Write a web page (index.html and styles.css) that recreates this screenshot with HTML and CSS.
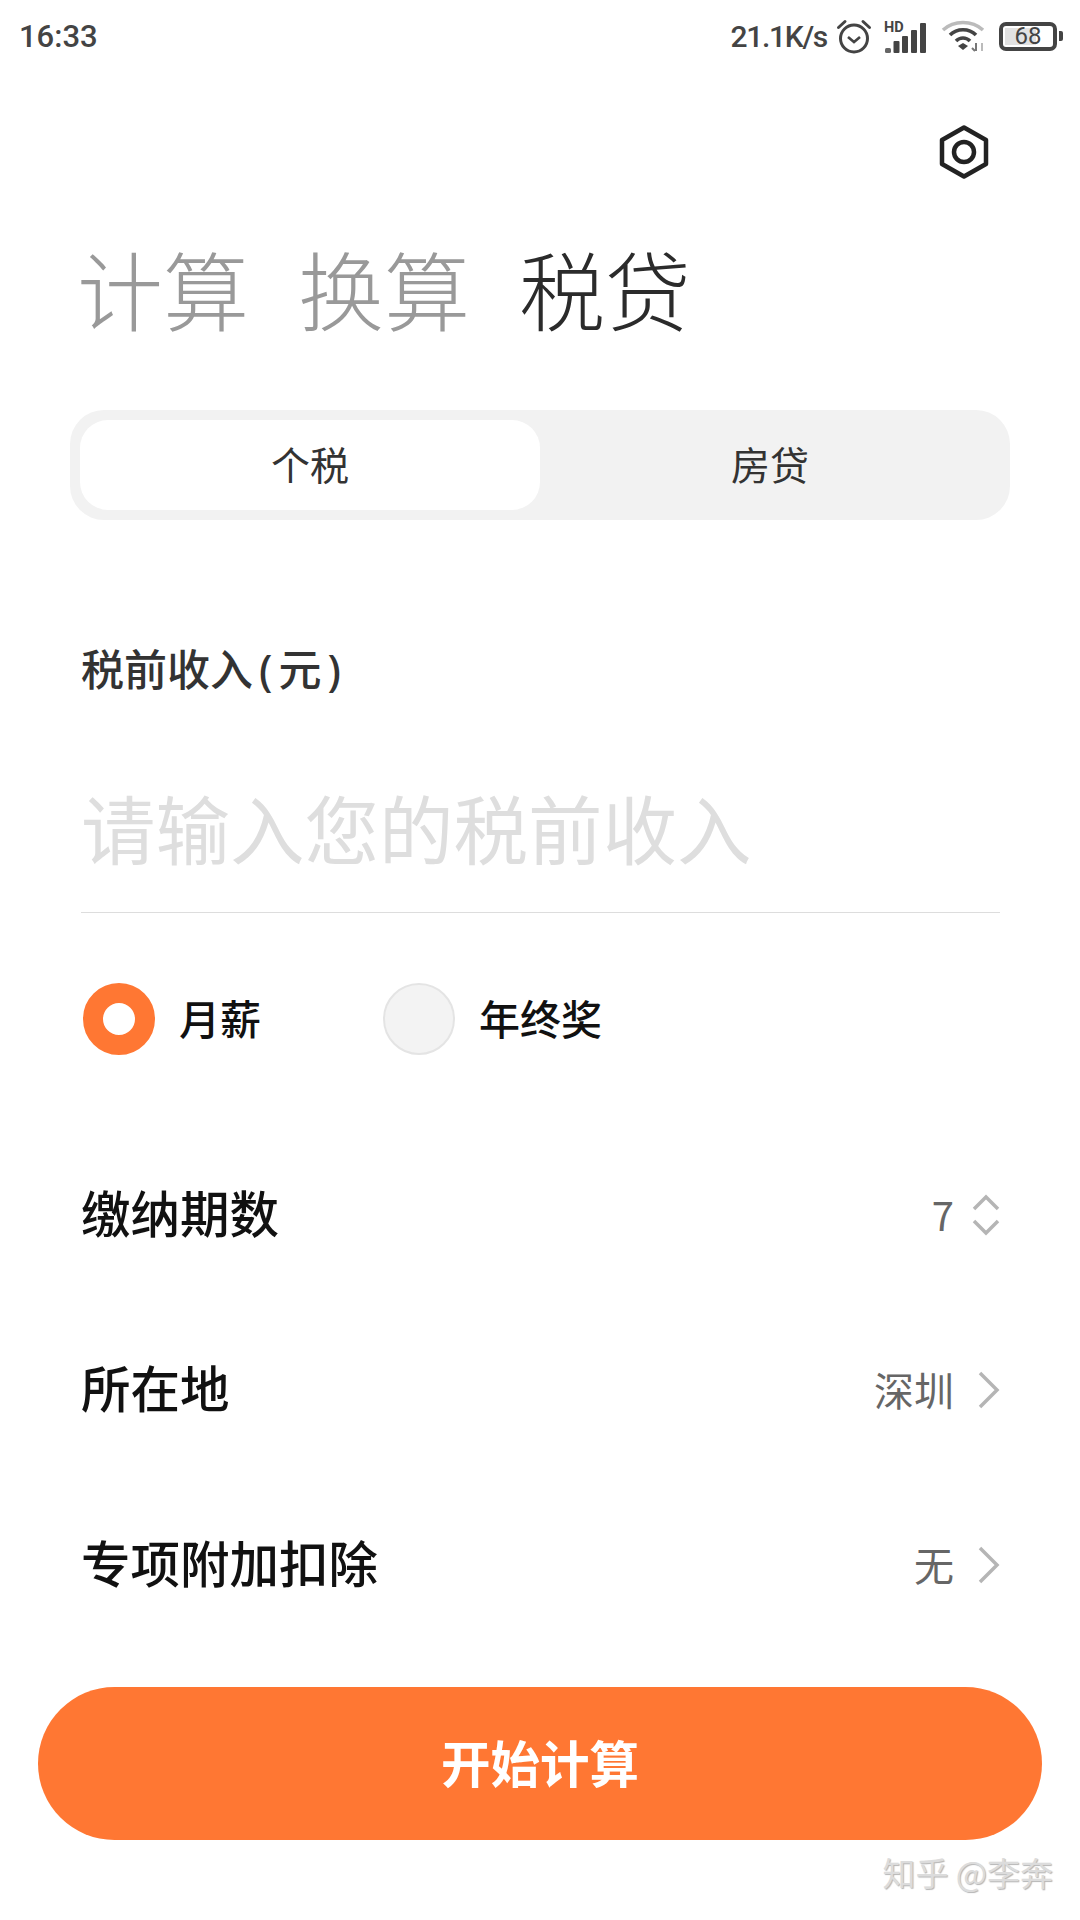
FILE: index.html
```html
<!DOCTYPE html>
<html lang="zh-CN">

<head>
    <meta charset="UTF-8">
    <meta name="viewport" content="width=device-width, initial-scale=1.0">
    <title>税贷</title>
    <link rel="stylesheet" href="styles.css">
</head>

<body>
    <div class="page">
        <div class="status">
            <span class="time">16:33</span>
            <div class="status-right">
                <span class="speed">21.1K/s</span>
                <svg class="ic-alarm" width="36" height="36" viewBox="0 0 36 36" fill="none" stroke="#444" stroke-width="3">
                    <circle cx="18" cy="20.5" r="13.5" />
                    <path d="M12 19l6 5 6-5" stroke-width="2.6" />
                    <path d="M2.5 9.5L9 3.5M33.5 9.5L27 3.5" stroke-linecap="round" />
                </svg>
                <svg class="ic-signal" width="44" height="36" viewBox="0 -4 44 36" fill="#444">
                    <text x="0" y="10" class="hd">HD</text>
                    <rect x="1" y="26" width="6" height="5" rx="1.500" fill="#666" />
                    <rect x="9.500" y="19" width="6" height="12" rx="1" />
                    <rect x="18" y="14" width="6" height="17" rx="1" />
                    <rect x="27" y="8" width="6" height="23" rx="1" />
                    <rect x="36" y="1" width="6" height="30" rx="1" />
                </svg>
                <svg class="ic-wifi" width="44" height="34" viewBox="0 0 44 34" fill="none" stroke="#444" stroke-width="3.6">
                    <path d="M2 11C13 1 31 1 42 11" stroke="#bbb" />
                    <path d="M9 16C16 9 28 9 35 16" />
                    <path d="M15 22C19 18 25 18 29 22" />
                    <path d="M17 27l5-3 5 3-5 4z" fill="#444" stroke="none" />
                    <path d="M35 24v8M31 29l3 3" stroke="#777" stroke-width="2" />
                    <path d="M41 24v8" stroke="#bbb" stroke-width="2" />
                </svg>
                <div class="battery">
                    <div class="battery-body">
                        <div class="battery-fill"></div>
                        <span class="battery-num">68</span>
                    </div>
                    <div class="battery-tip"></div>
                </div>
            </div>
        </div>

        <div class="toolbar">
            <svg width="50" height="54" viewBox="0 0 50 54" fill="none" stroke="#222" stroke-width="4.500" stroke-linejoin="round">
                <path d="M25 2.500L47 15v24L25 51.500 3 39V15z" />
                <circle cx="25" cy="27" r="10" />
            </svg>
        </div>

        <div class="tabs">
            <span class="tab">计算</span>
            <span class="tab">换算</span>
            <span class="tab tab-on">税贷</span>
        </div>

        <div class="segment">
            <div class="seg-item seg-on">个税</div>
            <div class="seg-item">房贷</div>
        </div>

        <div class="form">
            <div class="field-label">税前收入<span class="paren">(</span>元<span class="paren">)</span></div>
            <div class="field-input">请输入您的税前收入</div>

            <div class="radios">
                <div class="radio-item first">
                    <span class="radio radio-on"></span>
                    <span class="radio-text">月薪</span>
                </div>
                <div class="radio-item">
                    <span class="radio"></span>
                    <span class="radio-text">年终奖</span>
                </div>
            </div>

            <div class="row">
                <span class="row-name">缴纳期数</span>
                <span class="row-value">7</span>
                <svg class="updown" width="28" height="42" viewBox="0 0 28 42" fill="none" stroke="#b5b5b5" stroke-width="3.500">
                    <path d="M2 15L14 3l12 12M2 27l12 12 12-12" />
                </svg>
            </div>
            <div class="row">
                <span class="row-name">所在地</span>
                <span class="row-value">深圳</span>
                <svg class="arrow" width="22" height="38" viewBox="0 0 22 38" fill="none" stroke="#b5b5b5" stroke-width="3.500">
                    <path d="M2 2l17 17L2 36" />
                </svg>
            </div>
            <div class="row">
                <span class="row-name">专项附加扣除</span>
                <span class="row-value">无</span>
                <svg class="arrow" width="22" height="38" viewBox="0 0 22 38" fill="none" stroke="#b5b5b5" stroke-width="3.500">
                    <path d="M2 2l17 17L2 36" />
                </svg>
            </div>
        </div>

        <button class="start">开始计算</button>
        <div class="watermark">知乎 @李奔</div>
    </div>
</body>

</html>
```

FILE: styles.css
```css
* {
    box-sizing: border-box;
}

body {
    margin: 0;
    background-color: white;
    font-family: "Noto Sans", "Noto Sans CJK SC", sans-serif;
}

.page {
    width: 1080px;
    height: 1920px;
    overflow: hidden;
    display: flex;
    flex-direction: column;
}

.status {
    height: 72px;
    padding: 0 17px 0 19px;
    display: flex;
    justify-content: space-between;
    align-items: center;
    color: #444;
}
.time {
    font-family: Roboto, sans-serif;
    font-size: 31px;
    font-weight: 500;
}
.status-right {
    display: flex;
    align-items: center;
}
.speed {
    font-family: Roboto, sans-serif;
    font-size: 30px;
    font-weight: 500;
    letter-spacing: -1.3px;
    margin-right: 9px;
}
.ic-alarm {
    margin-right: 12px;
}
.ic-signal {
    margin-right: 13px;
}
.ic-wifi {
    margin-right: 14px;
}
.hd {
    font-family: Roboto, sans-serif;
    font-size: 14.5px;
    font-weight: 700;
}

.battery {
    display: flex;
    align-items: center;
    gap: 2px;
}
.battery-body {
    position: relative;
    width: 58px;
    height: 29px;
    border: 4px solid #444;
    border-radius: 7px;
    display: flex;
    justify-content: center;
    align-items: center;
}
.battery-fill {
    position: absolute;
    left: 2px;
    top: 2px;
    bottom: 2px;
    width: 62%;
    background-color: #e2e2e2;
}
.battery-num {
    position: relative;
    font-family: Roboto, sans-serif;
    font-size: 24px;
    color: #444;
}
.battery-tip {
    width: 4px;
    height: 10px;
    border-radius: 0 2px 2px 0;
    background-color: #444;
}

.toolbar {
    display: flex;
    justify-content: flex-end;
    padding: 53px 91px 0 0;
}
.toolbar svg {
    display: block;
}

.tabs {
    display: flex;
    gap: 49px;
    margin-top: 53px;
    padding-left: 77px;
}
.tab {
    font-family: "Noto Sans CJK SC", sans-serif;
    font-size: 86px;
    font-weight: 300;
    line-height: 112px;
    color: #999;
}
.tab-on {
    color: #2b2b2b;
}

.segment {
    display: flex;
    width: 940px;
    height: 110px;
    margin: 66px 0 0 70px;
    padding: 10px;
    background-color: #f2f2f2;
    border-radius: 34px;
}
.seg-item {
    flex: 1;
    display: flex;
    justify-content: center;
    align-items: center;
    padding-bottom: 4px;
    font-family: "Noto Sans CJK SC", sans-serif;
    font-size: 39px;
    color: #333;
    border-radius: 28px;
}
.seg-on {
    background-color: white;
}

.form {
    padding: 0 80px 0 81px;
}
.field-label {
    margin-top: 121px;
    font-size: 43px;
    line-height: 58px;
    font-weight: 500;
    color: #333;
}
.paren {
    padding: 0 6px;
}
.field-input {
    height: 214px;
    padding-top: 84px;
    border-bottom: 1px solid #ddd;
    font-family: "Noto Sans CJK SC", sans-serif;
    font-size: 74.5px;
    line-height: 88px;
    color: #dedede;
    white-space: nowrap;
}

.radios {
    display: flex;
    margin: 70px 0 0 2px;
}
.radio-item {
    display: flex;
    align-items: center;
    gap: 24px;
}
.radio-item.first {
    width: 300px;
}
.radio {
    width: 72px;
    height: 72px;
    border-radius: 50%;
    background-color: #f3f3f3;
    border: 2px solid #e4e4e4;
}
.radio-on {
    background-color: white;
    border: 20px solid #ff7733;
}
.radio-text {
    padding-bottom: 5px;
    font-size: 41px;
    font-weight: 500;
    color: #111;
}

.row {
    display: flex;
    align-items: center;
    height: 70px;
    margin-top: 105px;
}
.radios + .row {
    margin-top: 122px;
}
.row-name {
    flex: 1;
    font-size: 49.5px;
    font-weight: 500;
    color: #111;
}
.row-value {
    margin-top: 4px;
    font-family: "Noto Sans CJK SC", sans-serif;
    font-size: 40px;
    color: #666;
}
.updown {
    margin: 5px 0 0 18px;
}
.arrow {
    margin: 5px 0 0 24px;
}

.start {
    width: 1004px;
    height: 153px;
    margin: 90px 0 0 38px;
    padding-bottom: 6px;
    border: 0;
    border-radius: 77px;
    background-color: #ff7733;
    color: white;
    font-family: "Noto Sans CJK SC", sans-serif;
    font-size: 49.5px;
    font-weight: 600;
}

.watermark {
    margin: 8px 27px 0 0;
    text-align: right;
    font-family: "Noto Sans CJK SC", sans-serif;
    font-size: 33px;
    color: #dcdcdc;
    text-shadow: 1px 1px 1px #b5b5b5;
}
```
